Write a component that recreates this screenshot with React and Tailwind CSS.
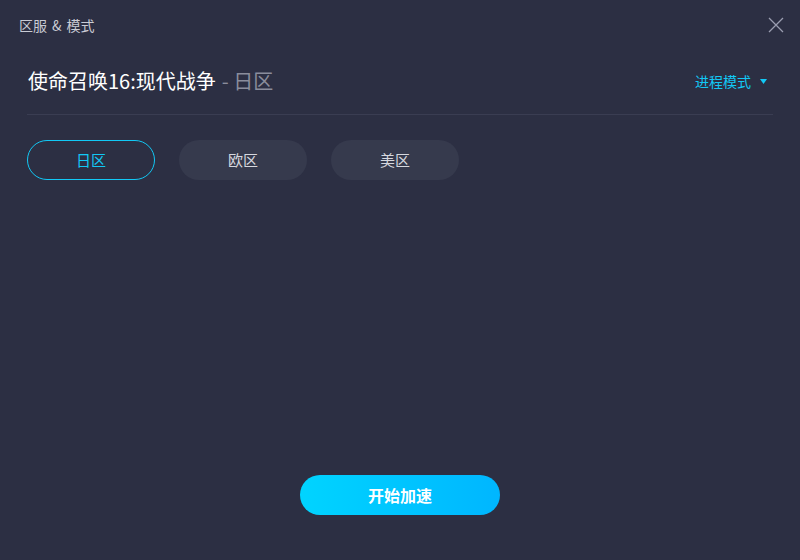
import { useState } from "react";

const regions = ["日区", "欧区", "美区"];

export default function App() {
    const [active, setActive] = useState("日区");

    return (
        <div
            className="w-[800px] h-[560px] bg-[#2c2f43] flex flex-col"
            style={{ fontFamily: '"Noto Sans CJK SC", "Noto Sans", sans-serif' }}
        >
            {/* Header */}
            <div className="h-[50px] flex items-center justify-between pl-[19px] pr-[16px] shrink-0">
                <span className="text-[14px] text-[#c9cbd4] flex items-center gap-[5px]">
                    <span>区服</span>
                    <span>&amp;</span>
                    <span>模式</span>
                </span>
                <svg width="16" height="16" viewBox="0 0 16 16" className="text-[#9a9db0]">
                    <path d="M1 1L15 15M15 1L1 15" stroke="currentColor" strokeWidth="1.3" />
                </svg>
            </div>

            <div className="flex-1 flex flex-col px-[27px]">
                {/* Title row */}
                <div className="h-[65px] flex items-center justify-between border-b border-[#3a3d52] pb-[2px]">
                    <div className="flex items-center text-[20px] pl-[1px]">
                        <span className="text-white">使命召唤16:现代战争</span>
                        <span className="text-[#8a8d9c] ml-[6px]">- {active}</span>
                    </div>
                    <button className="flex items-center text-[14px] text-[#12c8f5] pr-[6px]">
                        进程模式
                        <svg width="7" height="5" viewBox="0 0 7 5" className="ml-[9px]">
                            <path d="M0 0H7L3.5 5Z" fill="currentColor" />
                        </svg>
                    </button>
                </div>

                {/* Region pills */}
                <div className="flex gap-[24px] mt-[25px]">
                    {regions.map((r) => (
                        <button
                            key={r}
                            onClick={() => setActive(r)}
                            className={`w-[128px] h-[40px] rounded-full text-[15px] ${
                                active === r
                                    ? "border border-[#12c8f5] text-[#12c8f5]"
                                    : "bg-[#363a4d] text-[#d6d8df]"
                            }`}
                        >
                            {r}
                        </button>
                    ))}
                </div>

                <div className="flex-1" />

                {/* Footer */}
                <div className="flex justify-center pb-[45px]">
                    <button className="w-[200px] h-[40px] rounded-full bg-gradient-to-r from-[#00d4ff] to-[#00b6ff] text-white text-[16px] font-bold">
                        开始加速
                    </button>
                </div>
            </div>
        </div>
    );
}
